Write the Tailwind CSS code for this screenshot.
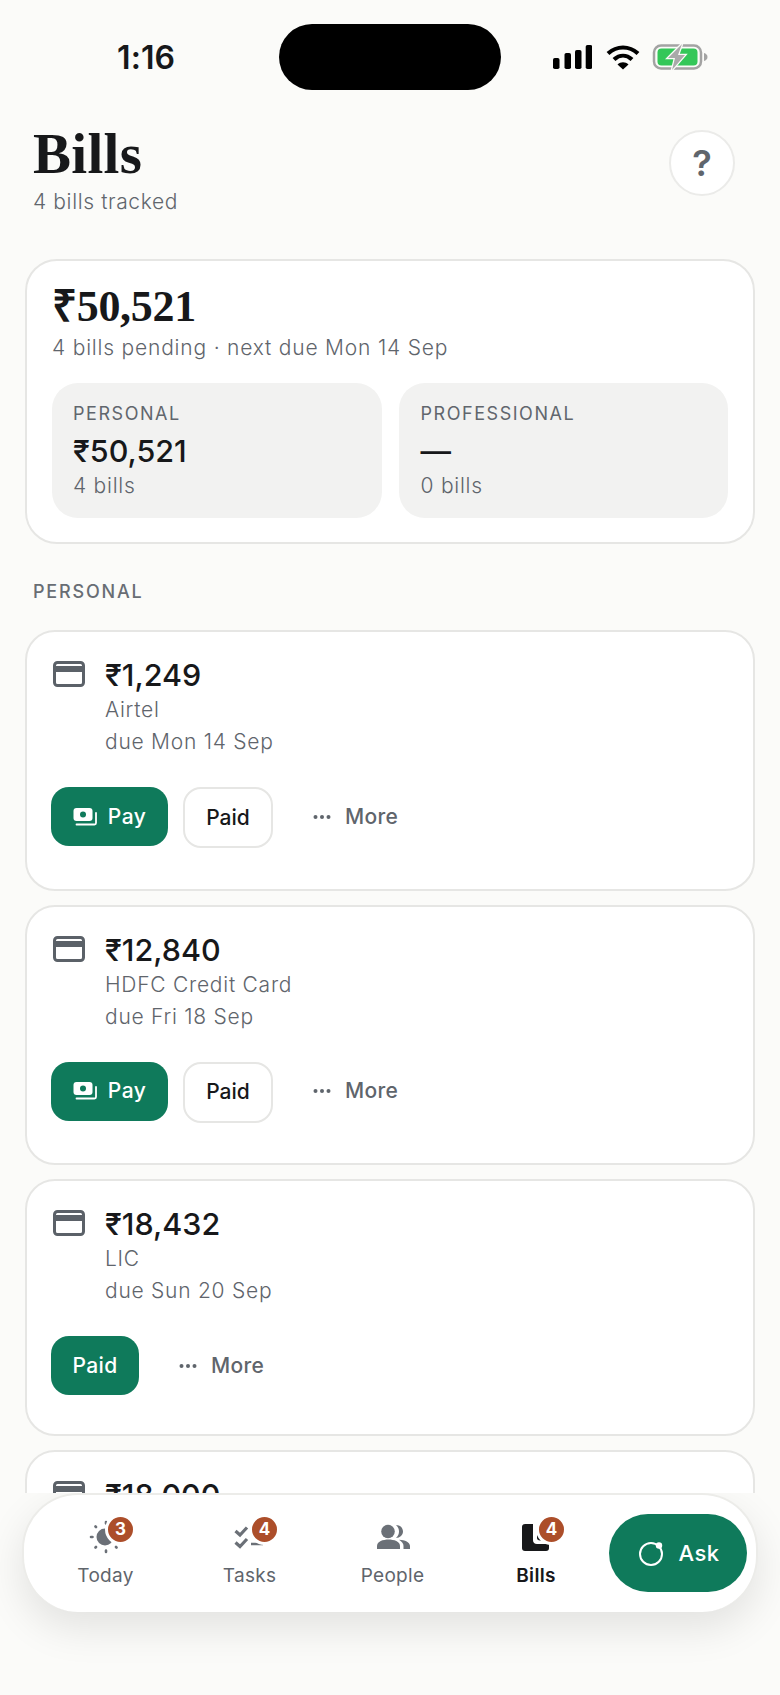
<!doctype html>
<html><head><meta charset="utf-8"><script src="https://cdn.jsdelivr.net/npm/@tailwindcss/browser@4"></script></head>
<body class="m-0">
<div class="relative w-[780px] h-[1695px] overflow-hidden bg-[#fbfbf9] font-['Inter','Liberation_Sans',sans-serif] text-[#17181a]">
  <!-- status bar -->
  <div class="relative h-[130px]">
    <div class="absolute left-[117px] top-[39px] text-[32px] leading-[38px] font-semibold tracking-[0.1px]">1:16</div>
    <div class="absolute left-[279px] top-[24px] w-[222px] h-[66px] rounded-[33px] bg-black"></div>
    <svg class="absolute left-[552px] top-[44px]" width="40" height="26" viewBox="0 0 40 26"><rect x="1" y="14" width="6.500" height="11" rx="1.800"/><rect x="12.500" y="9" width="6.500" height="16" rx="1.800"/><rect x="23" y="6" width="6.500" height="19" rx="1.800"/><rect x="33.700" y="1" width="6.500" height="24" rx="1.800"/></svg>
    <svg class="absolute left-[605px] top-[44px]" width="36" height="27" viewBox="0 0 36 27" fill="none" stroke="#000" stroke-width="4.200"><path d="M3 9.500C12 1.500 24 1.500 33 9.500"/><path d="M9 15.500C14.500 10.500 21.500 10.500 27 15.500"/><path d="M18 25.500L12.500 20.500C15.500 17.500 20.500 17.500 23.500 20.500Z" fill="#000" stroke="none"/></svg>
    <svg class="absolute left-[652px] top-[43px]" width="57" height="28" viewBox="0 0 57 28"><rect x="2" y="2.500" width="47" height="23" rx="7" fill="none" stroke="#a3a3a3" stroke-width="2.500"/><rect x="5.500" y="5.500" width="40" height="17" rx="4" fill="#34c759"/><path d="M52 10c2 .5 3.500 2 3.500 4s-1.500 3.500-3.500 4z" fill="#a3a3a3"/><path d="M30 1L16 15H23L20 27L33 12H26Z" fill="#a9a9a9" stroke="#fbfbf9" stroke-width="2.500" paint-order="stroke"/></svg>
  </div>
  <!-- header -->
  <div class="flex justify-between items-start pl-[33px] pr-[45px] h-[129px]">
    <div>
      <div class="-mt-[4px] font-['Liberation_Serif',serif] font-bold text-[57px] leading-[56px] tracking-[0.3px]">Bills</div>
      <div class="mt-[6px] text-[21px] leading-[28px] tracking-[0.62px] font-light text-[#61666d]">4 bills tracked</div>
    </div>
    <div class="w-[66px] h-[66px] rounded-full border-2 border-[#ebebe9] bg-white flex items-center justify-center text-[36px] font-semibold text-[#5f656c]">?</div>
  </div>
  <!-- summary -->
  <div class="mx-[25px] h-[285px] rounded-[32px] border-2 border-[#e6e6e4] bg-white px-[25px] pt-[23px]">
    <div class="font-['Liberation_Serif',serif] font-bold text-[44px] leading-[46px] tracking-[-0.3px]">₹50,521</div>
    <div class="mt-[4px] text-[21px] leading-[28px] tracking-[0.8px] font-light text-[#5f656c]">4 bills pending · next due Mon 14 Sep</div>
    <div class="mt-[21px] grid grid-cols-2 gap-[17px]">
      <div class="h-[135px] rounded-[26px] bg-[#f2f2f1] px-[21px] pt-[19px]">
        <div class="text-[18px] leading-[24px] tracking-[1.55px] text-[#61666d]">PERSONAL</div>
        <div class="mt-[5px] text-[30.5px] leading-[40px] font-medium">₹50,521</div>
        <div class="mt-[1px] text-[21px] leading-[28px] tracking-[0.75px] font-light text-[#5f656c]">4 bills</div>
      </div>
      <div class="h-[135px] rounded-[26px] bg-[#f2f2f1] px-[22px] pt-[19px]">
        <div class="text-[18px] leading-[24px] tracking-[1.55px] text-[#61666d]">PROFESSIONAL</div>
        <div class="mt-[5px] text-[30.5px] leading-[40px] font-medium">—</div>
        <div class="mt-[1px] text-[21px] leading-[28px] tracking-[0.75px] font-light text-[#5f656c]">0 bills</div>
      </div>
    </div>
  </div>
  <div class="pl-[33px] mt-[36px] h-[50px] text-[18px] leading-[24px] tracking-[1.8px] font-medium text-[#686d74]">PERSONAL</div>
  <!-- cards -->
  <div class="flex flex-col gap-[14px] mx-[25px]">
    <div class="h-[260.5px] rounded-[30px] border-2 border-[#e6e6e4] bg-white px-[24px] pt-[24px]">
      <div class="flex gap-[20px]">
        <svg class="mt-[5px] ml-[2px]" width="32" height="26" viewBox="0 0 32 26"><rect x="1.500" y="1.500" width="29" height="23" rx="3" fill="none" stroke="#5b6168" stroke-width="3"/><rect x="2" y="5" width="28" height="6" fill="#5b6168"/></svg>
        <div>
          <div class="text-[30.5px] leading-[38px] font-medium">₹1,249</div>
          <div class="text-[21px] leading-[32px] tracking-[0.75px] font-light text-[#5f656c]">Airtel</div>
          <div class="text-[21px] leading-[32px] tracking-[0.75px] font-light text-[#5f656c]">due Mon 14 Sep</div>
        </div>
      </div>
      <div class="mt-[29px] flex items-start gap-[15px]">
        <div class="w-[117px] h-[59px] rounded-[18px] bg-[#0f7a5b] text-white flex items-center justify-center gap-[11px] text-[21px] font-medium tracking-[0.4px]">
          <svg width="24" height="20" viewBox="0 0 24 20"><rect x="0.500" y="1" width="19" height="13" rx="3" fill="#fff"/><circle cx="10" cy="7.500" r="3" fill="#0f7a5b"/><path d="M3.500 17.500H21.500A1.500 1.500 0 0 0 23 16V6" fill="none" stroke="#fff" stroke-width="1.800" stroke-linecap="round"/></svg>
          <span>Pay</span>
        </div>
        <div class="w-[90px] h-[61px] rounded-[18px] border-2 border-[#e6e6e4] bg-white flex items-center justify-center text-[21px] font-medium">Paid</div>
        <div class="h-[59px] flex items-center gap-[14px] ml-[25px] text-[21px] font-medium text-[#5f656c] tracking-[0.3px]">
          <svg width="18" height="6" viewBox="0 0 18 6" fill="#5f656c"><circle cx="2.500" cy="3" r="2"/><circle cx="9" cy="3" r="2"/><circle cx="15.500" cy="3" r="2"/></svg>
          <span>More</span>
        </div>
      </div>
    </div>
    <div class="h-[260.5px] rounded-[30px] border-2 border-[#e6e6e4] bg-white px-[24px] pt-[24px]">
      <div class="flex gap-[20px]">
        <svg class="mt-[5px] ml-[2px]" width="32" height="26" viewBox="0 0 32 26"><rect x="1.500" y="1.500" width="29" height="23" rx="3" fill="none" stroke="#5b6168" stroke-width="3"/><rect x="2" y="5" width="28" height="6" fill="#5b6168"/></svg>
        <div>
          <div class="text-[30.5px] leading-[38px] font-medium">₹12,840</div>
          <div class="text-[21px] leading-[32px] tracking-[0.75px] font-light text-[#5f656c]">HDFC Credit Card</div>
          <div class="text-[21px] leading-[32px] tracking-[0.75px] font-light text-[#5f656c]">due Fri 18 Sep</div>
        </div>
      </div>
      <div class="mt-[29px] flex items-start gap-[15px]">
        <div class="w-[117px] h-[59px] rounded-[18px] bg-[#0f7a5b] text-white flex items-center justify-center gap-[11px] text-[21px] font-medium tracking-[0.4px]">
          <svg width="24" height="20" viewBox="0 0 24 20"><rect x="0.500" y="1" width="19" height="13" rx="3" fill="#fff"/><circle cx="10" cy="7.500" r="3" fill="#0f7a5b"/><path d="M3.500 17.500H21.500A1.500 1.500 0 0 0 23 16V6" fill="none" stroke="#fff" stroke-width="1.800" stroke-linecap="round"/></svg>
          <span>Pay</span>
        </div>
        <div class="w-[90px] h-[61px] rounded-[18px] border-2 border-[#e6e6e4] bg-white flex items-center justify-center text-[21px] font-medium">Paid</div>
        <div class="h-[59px] flex items-center gap-[14px] ml-[25px] text-[21px] font-medium text-[#5f656c] tracking-[0.3px]">
          <svg width="18" height="6" viewBox="0 0 18 6" fill="#5f656c"><circle cx="2.500" cy="3" r="2"/><circle cx="9" cy="3" r="2"/><circle cx="15.500" cy="3" r="2"/></svg>
          <span>More</span>
        </div>
      </div>
    </div>
    <div class="h-[257px] rounded-[30px] border-2 border-[#e6e6e4] bg-white px-[24px] pt-[24px]">
      <div class="flex gap-[20px]">
        <svg class="mt-[5px] ml-[2px]" width="32" height="26" viewBox="0 0 32 26"><rect x="1.500" y="1.500" width="29" height="23" rx="3" fill="none" stroke="#5b6168" stroke-width="3"/><rect x="2" y="5" width="28" height="6" fill="#5b6168"/></svg>
        <div>
          <div class="text-[30.5px] leading-[38px] font-medium">₹18,432</div>
          <div class="text-[21px] leading-[32px] tracking-[0.75px] font-light text-[#5f656c]">LIC</div>
          <div class="text-[21px] leading-[32px] tracking-[0.75px] font-light text-[#5f656c]">due Sun 20 Sep</div>
        </div>
      </div>
      <div class="mt-[29px] flex items-start gap-[15px]">
        <div class="w-[88px] h-[59px] rounded-[18px] bg-[#0f7a5b] text-white flex items-center justify-center text-[21px] font-medium tracking-[0.4px]">Paid</div>
        <div class="h-[59px] flex items-center gap-[14px] ml-[25px] text-[21px] font-medium text-[#5f656c] tracking-[0.3px]">
          <svg width="18" height="6" viewBox="0 0 18 6" fill="#5f656c"><circle cx="2.500" cy="3" r="2"/><circle cx="9" cy="3" r="2"/><circle cx="15.500" cy="3" r="2"/></svg>
          <span>More</span>
        </div>
      </div>
    </div>
    <div class="h-[255px] rounded-[30px] border-2 border-[#e6e6e4] bg-white px-[24px] pt-[24px]">
      <div class="flex gap-[20px]">
        <svg class="mt-[5px] ml-[2px]" width="32" height="26" viewBox="0 0 32 26"><rect x="1.500" y="1.500" width="29" height="23" rx="3" fill="none" stroke="#5b6168" stroke-width="3"/><rect x="2" y="5" width="28" height="6" fill="#5b6168"/></svg>
        <div class="text-[30.5px] leading-[38px] font-medium">₹18,000</div>
      </div>
    </div>
  </div>
  <!-- bottom nav -->
  <div class="absolute left-0 right-0 top-[1493px] bottom-0 overflow-hidden bg-[#fbfbf9]">
    <div class="absolute left-[22px] top-0 w-[736px] h-[119px] rounded-[56px] bg-white border-2 border-[#ecece9] border-b-0 shadow-[0_16px_40px_rgba(0,0,0,0.10)] flex items-start">
      <div class="relative w-[145px] ml-[9px] pt-[24px] flex flex-col items-center">
        <svg width="36" height="36" viewBox="0 0 36 36" fill="#6b7077"><circle cx="17" cy="18" r="8.500"/><g stroke="#6b7077" stroke-width="2.600" stroke-linecap="round"><path d="M18 3V4.500M18 31.500V33M3 18H4.500M7.500 7.500L8 8M7.500 28.500L8 28M28.500 28.500L28 28"/></g></svg>
        <div class="absolute left-[72px] top-[19px] w-[31px] h-[31px] rounded-full bg-[#ac4e2a] border-[3px] border-white text-white text-[17px] font-bold flex items-center justify-center">3</div>
        <div class="mt-[8px] text-[19px] leading-[26px] tracking-[0.3px] text-[#5f656c]">Today</div>
      </div>
      <div class="relative w-[143px] pt-[24px] flex flex-col items-center">
        <svg width="36" height="36" viewBox="0 0 36 36" fill="none" stroke="#6b7077" stroke-width="3.200" stroke-linejoin="miter"><path d="M3.500 12L8 16L15 8.500"/><path d="M3.500 23.500L8 27.500L15 20"/><path d="M19 25H31" stroke-width="2.500"/></svg>
        <div class="absolute left-[71px] top-[19px] w-[31px] h-[31px] rounded-full bg-[#ac4e2a] border-[3px] border-white text-white text-[17px] font-bold flex items-center justify-center">4</div>
        <div class="mt-[8px] text-[19px] leading-[26px] tracking-[0.3px] text-[#5f656c]">Tasks</div>
      </div>
      <div class="relative w-[143px] pt-[24px] flex flex-col items-center">
        <svg width="36" height="36" viewBox="0 0 36 36" fill="#6b7077"><circle cx="13" cy="12.500" r="6.800"/><path d="M2 30V27C2 22.500 8 20.500 13.500 20.500C19 20.500 25 22.500 25 27V30Z"/><path d="M21 6C25 6 28 8.800 28 12.500C28 16 25 19 21 19C23 17 24 15 24 12.500C24 10 23 8 21 6Z"/><path d="M24 20.700C30 21 35 23 35 27V30H28.500V27C28.500 24.500 27 22.500 24 20.700Z"/></svg>
        <div class="mt-[8px] text-[19px] leading-[26px] tracking-[0.3px] text-[#5f656c]">People</div>
      </div>
      <div class="relative w-[144px] pt-[24px] flex flex-col items-center">
        <svg width="36" height="36" viewBox="0 0 36 36"><rect x="4" y="5" width="27" height="27" rx="3" fill="#17181a"/><path d="M15 5H31V25H19C16.500 25 15 23.500 15 21Z" fill="#fff"/><path d="M19 12H31V21.500H22C20 21.500 19 20.500 19 19Z" fill="#17181a"/></svg>
        <div class="absolute left-[72px] top-[19px] w-[31px] h-[31px] rounded-full bg-[#ac4e2a] border-[3px] border-white text-white text-[17px] font-bold flex items-center justify-center">4</div>
        <div class="mt-[8px] text-[19px] leading-[26px] tracking-[0.3px] font-semibold">Bills</div>
      </div>
      <div class="mt-[19px] ml-[1px] w-[138px] h-[78px] rounded-full bg-[#0f7a5b] text-white flex items-center justify-center gap-[14px] text-[22px] font-medium tracking-[0.4px]">
        <svg width="28" height="28" viewBox="0 0 28 28" fill="none"><circle cx="14" cy="15" r="11" stroke="#fff" stroke-width="2"/><circle cx="22" cy="6.500" r="3.200" fill="#fff"/></svg>
        <span>Ask</span>
      </div>
    </div>
  </div>
</div>
</body></html>
